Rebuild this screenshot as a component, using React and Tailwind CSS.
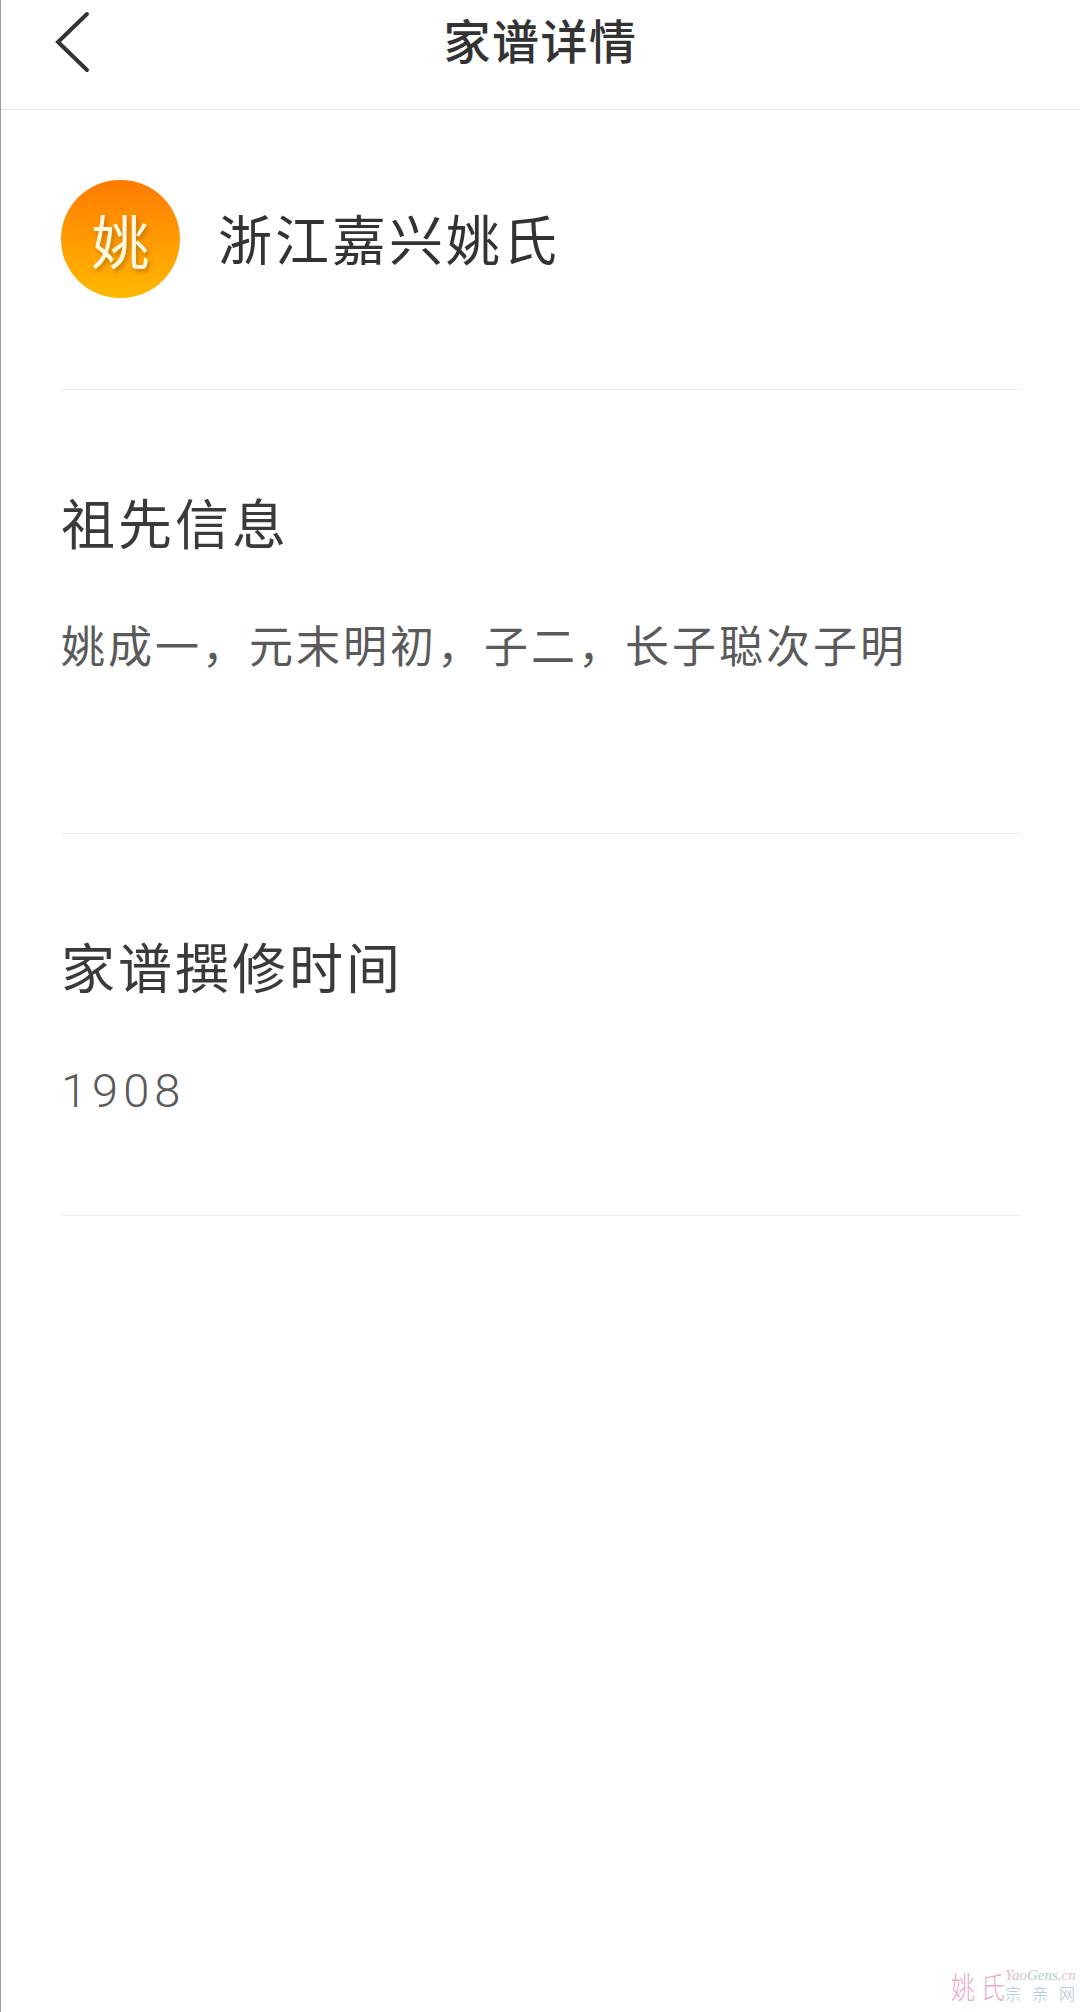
import React from 'react';

const cjk = { fontFamily: '"Noto Sans CJK SC", "Noto Sans", sans-serif' };

function Section({ title, bodyClass, children, className }) {
  return (
    <section className={`border-b border-[#ececec] ${className}`}>
      <h2 className="text-[54px] leading-[60px] tracking-[3px] font-normal text-[#3a3a3a]">{title}</h2>
      <p className={`mt-[62px] leading-[60px] text-[#5a5a5a] ${bodyClass}`}>{children}</p>
    </section>
  );
}

export default function App() {
  return (
    <div className="w-[1080px] h-[2012px] relative overflow-hidden bg-white border-l border-[#9a9a9a]" style={cjk}>
      {/* Header */}
      <header className="h-[110px] relative flex items-center justify-center border-b border-[#e6e6e6]">
        <svg className="absolute left-[52px] top-[8px]" width="40" height="68" viewBox="0 0 40 68" fill="none">
          <path d="M34 6 L5 34 L34 62" stroke="#333333" strokeWidth="4" strokeLinecap="round" />
        </svg>
        <h1 className="text-[47px] leading-[60px] font-medium text-[#333333] tracking-[1.5px] -mt-[32px]">家谱详情</h1>
      </header>

      <main className="px-[60px] pr-[59px]">
        {/* Clan name */}
        <div className="h-[280px] flex items-start border-b border-[#ececec] pt-[70px]">
          <div className="w-[119px] h-[118px] rounded-full bg-gradient-to-b from-[#ff7a00] to-[#ffb800] flex items-center justify-center">
            <span className="text-[58px] leading-none font-normal text-[#fff8e0] [text-shadow:2px_3px_4px_rgba(150,80,0,0.5)]">姚</span>
          </div>
          <span className="ml-[38px] mt-[28px] text-[54px] leading-[60px] tracking-[3px] font-normal text-[#333333]">浙江嘉兴姚氏</span>
        </div>

        <Section title="祖先信息" bodyClass="text-[44px] tracking-[3px] font-normal" className="h-[444px] pt-[102px]">姚成一，元末明初，子二，长子聪次子明</Section>
        <Section title="家谱撰修时间" bodyClass="pt-[3px] text-[47px] tracking-[5px] font-light font-['Roboto']" className="h-[382px] pt-[102px]">1908</Section>
      </main>

      {/* Watermark */}
      <div className="absolute right-[5px] bottom-[9px] flex items-end">
        <div className="flex gap-[6px] w-[54px] text-[24px] leading-[28px] font-light text-[#e9a9c8] scale-y-125 origin-bottom">
          <span>姚</span>
          <span>氏</span>
        </div>
        <div className="w-[70px] flex flex-col">
          <span className="text-[15px] leading-[16px] italic text-[#dcc0cc] whitespace-nowrap" style={{ fontFamily: '"Liberation Serif", serif' }}>
            Yao<span className="text-[#a8d4b4]">Gens</span>.cn
          </span>
          <div className="flex justify-between text-[16px] leading-[20px] font-light text-[#a9c4d8]">
            <span>宗</span>
            <span>亲</span>
            <span>网</span>
          </div>
        </div>
      </div>
    </div>
  );
}
